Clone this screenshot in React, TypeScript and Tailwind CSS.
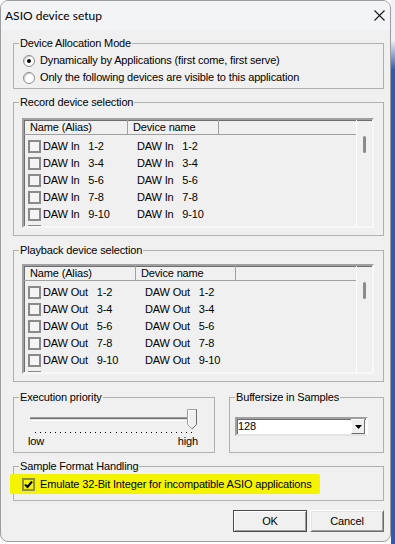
import React from 'react';

const ui = "font-['Liberation_Sans',Arial,sans-serif] text-[11px] leading-[13px] tracking-[-0.15px] text-black";

function Check({ checked = false, hi = false }: { checked?: boolean; hi?: boolean }) {
  return (
    <div
      className={`flex h-[13px] w-[13px] shrink-0 items-center justify-center border-2 ${
        hi ? 'border-[#8e8e4a] bg-transparent' : 'border-[#8a8a8a] bg-[#f4f4f4]'
      }`}
    >
      {checked && (
        <svg width="9" height="9" viewBox="0 0 9 9">
          <path d="M1 4.5 L3.5 7 L8 1.5" fill="none" stroke="#000" strokeWidth="2" />
        </svg>
      )}
    </div>
  );
}

function Radio({ on = false }: { on?: boolean }) {
  return (
    <div className="flex h-[12px] w-[12px] shrink-0 items-center justify-center rounded-full border border-[#8d8d8d] bg-white shadow-[inset_1px_1px_0_#d0d0d0]">
      {on && <div className="h-[4px] w-[4px] rounded-full bg-black" />}
    </div>
  );
}

function Group({ title, className = '', children }: { title: string; className?: string; children: React.ReactNode }) {
  return (
    <fieldset className={`border border-[#b0b0b0] ${className}`}>
      <legend className="ml-[5px] px-[1px] leading-[13px]">{title}</legend>
      {children}
    </fieldset>
  );
}

const ranges = ['1-2', '3-4', '5-6', '7-8', '9-10', '11-12'];

function DeviceList({ prefix, h1, h2, col1 }: { prefix: string; h1: string; h2: string; col1: string }) {
  return (
    <div className="flex h-[110px] border-2 border-t-[#a0a0a0] border-l-[#a0a0a0] border-r-[#f8f8f8] border-b-[#f8f8f8] bg-[#f0f0f0] shadow-[inset_1px_1px_0_#6e6e6e]">
      <div className="flex min-w-0 flex-1 flex-col overflow-hidden">
        <div className="flex h-[15px] shrink-0 border-b border-[#a0a0a0]">
          <div className={`${h1} border-r border-[#a0a0a0] pl-[6px] leading-[14px]`}>Name (Alias)</div>
          <div className={`${h2} border-r border-[#a0a0a0] pl-[5px] leading-[14px]`}>Device name</div>
          <div className="flex-1" />
        </div>
        <div className="pt-[3px]">
          {ranges.map((r) => (
            <div key={r} className="flex h-[17px] items-center pl-[4px]">
              <div className={`flex ${col1} items-center`}>
                <Check />
                <span className="ml-[2px] whitespace-pre">{`${prefix}   ${r}`}</span>
              </div>
              <span className="whitespace-pre">{`${prefix}   ${r}`}</span>
            </div>
          ))}
        </div>
      </div>
      <div className="w-[16px] shrink-0 border-l border-white pl-[6px] pt-[16px]">
        <div className="h-[17px] w-[3px] rounded-full bg-[#8b8b8b]" />
      </div>
    </div>
  );
}

function Slider() {
  const dots = Array.from({ length: 32 }, (_, i) => Math.round(21 + (i * 156) / 31) + 0.5);
  return (
    <svg width="200" height="31" viewBox="0 0 200 31" className="block">
      <rect x="16" y="13" width="167" height="1" fill="#a0a0a0" />
      <rect x="16" y="14" width="167" height="1" fill="#6e6e6e" />
      <rect x="16" y="15" width="167" height="1" fill="#e3e3e3" />
      <rect x="16" y="16" width="167" height="1" fill="#ffffff" />
      {dots.map((x) => (
        <rect key={x} x={x - 0.5} y="28" width="1" height="1" fill="#000" />
      ))}
      <path d="M173.5 5.5 H182.5 V20.5 L178 25 L173.5 20.5 Z" fill="#f0f0f0" stroke="#a0a0a0" />
      <path d="M174.5 20 V6.5 H181.5" fill="none" stroke="#ffffff" />
      <path d="M182.5 5.5 V20.5 L178 25" fill="none" stroke="#6e6e6e" />
    </svg>
  );
}

export default function App() {
  return (
    <div className={`flex h-[544px] w-[395px] ${ui}`}>
      <div className="flex h-[542px] w-[391px] shrink-0 flex-col overflow-hidden rounded-[8px] border border-[#9c9c9c] bg-[#f0f0f0]">
        <div className="flex h-[29px] shrink-0 items-center justify-between bg-[#f3f4f6] pl-[4px] pr-[5px]">
          <span className="font-['Lato',sans-serif] text-[12px] leading-[16px] tracking-normal">ASIO device setup</span>
          <svg width="11" height="11" viewBox="0 0 11 11">
            <path d="M0.5 0.5 L10.5 10.5 M10.5 0.5 L0.5 10.5" stroke="#1a1a1a" strokeWidth="1.1" />
          </svg>
        </div>

        <div className="flex flex-col pl-[12px] pr-[6px]">
          <Group title="Device Allocation Mode" className="mt-[7px]">
            <div className="mt-[2px] pb-[2px] pl-[9px]">
              <div className="flex h-[17px] items-center gap-[5px]">
                <Radio on />
                <span>Dynamically by Applications (first come, first serve)</span>
              </div>
              <div className="flex h-[17px] items-center gap-[5px]">
                <Radio />
                <span>Only the following devices are visible to this application</span>
              </div>
            </div>
          </Group>

          <Group title="Record device selection" className="mt-[7px]">
            <div className="pb-[7px] pl-[8px] pr-[9px] pt-[9px]">
              <DeviceList prefix="DAW In" h1="w-[104px]" h2="w-[91px]" col1="w-[109px]" />
            </div>
          </Group>

          <Group title="Playback device selection" className="mt-[8px]">
            <div className="pb-[7px] pl-[8px] pr-[9px] pt-[7px]">
              <DeviceList prefix="DAW Out" h1="w-[112px]" h2="w-[100px]" col1="w-[117px]" />
            </div>
          </Group>

          <div className="mt-[9px] flex gap-[14px]">
            <Group title="Execution priority" className="w-[202px]">
              <div className="h-[48px]">
                <Slider />
                <div className="flex justify-between pl-[14px] pr-[16px]">
                  <span>low</span>
                  <span>high</span>
                </div>
              </div>
            </Group>
            <Group title="Buffersize in Samples" className="flex-1">
              <div className="h-[48px] pl-[5px] pt-[13px]">
                <div className="flex h-[19px] w-[133px] items-center border-2 border-t-[#a0a0a0] border-l-[#a0a0a0] border-r-white border-b-[#e3e3e3] bg-white pl-[1px] pr-[1px] shadow-[inset_1px_1px_0_#6e6e6e]">
                  <span className="flex-1">128</span>
                  <div className="flex h-[15px] w-[14px] items-center justify-center border border-t-white border-l-white border-r-[#6e6e6e] border-b-[#6e6e6e] bg-[#f0f0f0]">
                    <svg width="7" height="4" viewBox="0 0 7 4">
                      <path d="M0 0 H7 L3.5 4 Z" fill="#000" />
                    </svg>
                  </div>
                </div>
              </div>
            </Group>
          </div>

          <Group title="Sample Format Handling" className="mt-[7px]">
            <div className="pb-[6px] pt-[1px]">
              <div className="-ml-[4px] flex h-[20px] w-[310px] items-center rounded-[2px] bg-[#f4f400] pl-[12px]">
                <Check checked hi />
                <span className="ml-[5px] whitespace-nowrap">Emulate 32-Bit Integer for incompatible ASIO applications</span>
              </div>
            </div>
          </Group>

          <div className="mt-[9px] flex justify-end gap-[3px]">
            <button className="h-[22px] w-[74px] border border-[#4a4a4a] bg-[#f0f0f0] shadow-[inset_1px_1px_0_#fff,inset_-1px_-1px_0_#a0a0a0]">
              OK
            </button>
            <button className="h-[22px] w-[74px] border border-t-white border-l-white border-r-[#6e6e6e] border-b-[#6e6e6e] bg-[#f0f0f0] shadow-[inset_1px_1px_0_#e3e3e3,inset_-1px_-1px_0_#a0a0a0]">
              Cancel
            </button>
          </div>
        </div>
      </div>
      <div className="flex-1 bg-[linear-gradient(#eef2f8_0,#eef2f8_40px,#2a5cb8_70px)]" />
    </div>
  );
}
